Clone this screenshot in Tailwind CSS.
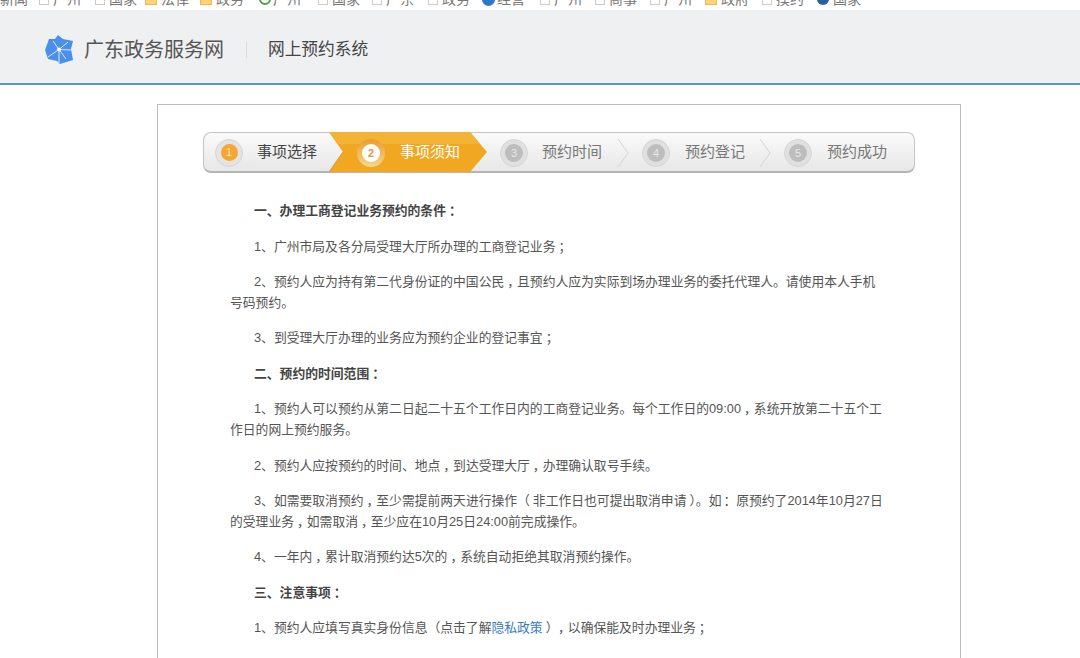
<!DOCTYPE html>
<html lang="zh-CN">
<head>
  <meta charset="UTF-8">
  <title>网上预约系统</title>
  <script src="https://cdn.jsdelivr.net/npm/@tailwindcss/browser@4"></script>
</head>
<body class="bg-white h-[658px] overflow-hidden font-['Liberation_Sans','Noto_Sans_CJK_SC',sans-serif] text-[13px] text-[#555]">

  <!-- bookmarks, cut off by the window edge -->
  <div class="h-[10px] overflow-hidden bg-white relative text-[14px] leading-[14px] text-[#777] whitespace-nowrap">
    <div class="flex -mt-[8px] items-center">
      <span class="w-[39px]">新闻</span>
      <span class="w-[56px] flex items-center gap-[4px]"><i class="block w-[10px] h-[11px] border border-[#ccc]"></i>广州</span>
      <span class="w-[50px] flex items-center gap-[4px]"><i class="block w-[10px] h-[11px] border border-[#ccc]"></i>国家</span>
      <span class="w-[55px] flex items-center gap-[4px]"><i class="block w-[12px] h-[11px] bg-[#ffd479] border border-[#eeb84f]"></i>法律</span>
      <span class="w-[59px] flex items-center gap-[4px]"><i class="block w-[12px] h-[11px] bg-[#ffd479] border border-[#eeb84f]"></i>政务</span>
      <span class="w-[59px] flex items-center gap-[2px]"><i class="block w-[12px] h-[12px] rounded-full border-2 border-[#4aa34a] bg-white"></i>广州</span>
      <span class="w-[54px] flex items-center gap-[4px]"><i class="block w-[10px] h-[11px] border border-[#ccc]"></i>国家</span>
      <span class="w-[56px] flex items-center gap-[4px]"><i class="block w-[10px] h-[11px] border border-[#ccc]"></i>广东</span>
      <span class="w-[54px] flex items-center gap-[4px]"><i class="block w-[10px] h-[11px] border border-[#ccc]"></i>政务</span>
      <span class="w-[58px] flex items-center gap-[2px]"><i class="block w-[13px] h-[13px] rounded-full bg-[#2f78c4]"></i>经营</span>
      <span class="w-[55px] flex items-center gap-[4px]"><i class="block w-[10px] h-[11px] border border-[#ccc]"></i>广州</span>
      <span class="w-[55px] flex items-center gap-[4px]"><i class="block w-[10px] h-[11px] border border-[#ccc]"></i>商事</span>
      <span class="w-[55px] flex items-center gap-[4px]"><i class="block w-[10px] h-[11px] border border-[#ccc]"></i>广州</span>
      <span class="w-[57px] flex items-center gap-[4px]"><i class="block w-[12px] h-[11px] bg-[#ffd479] border border-[#eeb84f]"></i>政府</span>
      <span class="w-[55px] flex items-center gap-[4px]"><i class="block w-[10px] h-[11px] border border-[#ccc]"></i>摸约</span>
      <span class="flex items-center gap-[4px]"><i class="block w-[12px] h-[12px] rounded-full bg-[#2c5f9e]"></i>国家</span>
    </div>
  </div>

  <!-- Header -->
  <header class="h-[75px] pt-[6px] bg-[#eff0f2] border-b-2 border-[#5b93c7] flex items-center pl-[45px] box-border">
    <svg class="w-[30px] h-[30px] shrink-0" viewBox="0 0 30 30">
      <path d="M13 0 L18 4 L28 6 L26 14 L28 25 L15 29 L12 26 L3 24 L0 15 L4 4 L10 4Z" fill="#4a90ea"/>
      <g stroke="#d8e8fb" stroke-width="1">
        <path d="M14 14.5 L8 6"/>
        <path d="M14 14.5 L23 7"/>
        <path d="M14 14.5 L27 15"/>
        <path d="M14 14.5 L21 24"/>
        <path d="M14 14.5 L14 28"/>
        <path d="M14 14.5 L3 22"/>
      </g>
      <circle cx="14" cy="14.5" r="2" fill="#fff"/>
    </svg>
    <span class="ml-[9px] text-[20px] text-[#555]">广东政务服务网</span>
    <i class="block w-px h-[16px] bg-[#d9dadc] ml-[22px]"></i>
    <span class="ml-[21px] text-[16.7px] text-[#444]">网上预约系统</span>
  </header>

  <!-- Main card -->
  <main class="w-[804px] ml-[157px] mt-[19px] h-[600px] border border-[#bdbdbd] bg-white pt-[27px]">
    <div class="relative mx-[45px] w-[712px] h-[41px] rounded-[8px] border border-[#c4c4c4] border-b-2 border-b-[#b5b5b5] bg-gradient-to-b from-[#fafafa] to-[#e7e7e7] flex pl-[11px] box-border">
      <div class="w-[115px] pt-[1px] flex items-center shrink-0">
        <span class="w-[28px] h-[28px] rounded-full bg-[#e4e4e4] border border-[#d6d6d6] flex items-center justify-center shrink-0"><b class="w-[17px] h-[17px] rounded-full bg-[#f5a733] text-[#fbe3b8] text-[11px] leading-[17px] text-center font-normal">1</b></span>
        <span class="ml-[14px] text-[15px] text-[#444] whitespace-nowrap">事项选择</span>
      </div>
      <div class="relative w-[158px] pt-[1px] shrink-0 flex items-center">
        <svg class="absolute -left-px -top-px w-[159px] h-[41px]" viewBox="0 0 159 41">
          <polygon points="0,0 141,0 158,20 141,40 0,40 14,20" fill="#f2a723"/>
          <polygon points="0,0 141,0 151,12 9,12" fill="#f3b334"/>
          <path d="M0 40 L14 20" stroke="#cf9a3a" fill="none"/>
        </svg>
        <span class="relative ml-[27px] w-[28px] h-[28px] rounded-full bg-gradient-to-b from-[#e89d28] to-[#f9d68a] flex items-center justify-center shrink-0"><b class="w-[18px] h-[18px] rounded-full bg-white text-[#ee8f3a] text-[11px] leading-[18px] text-center">2</b></span>
        <span class="relative ml-[15px] text-[15px] text-white whitespace-nowrap">事项须知</span>
      </div>
      <div class="w-[142px] pt-[1px] flex items-center shrink-0 relative text-[#777]">
        <span class="ml-[12px] w-[28px] h-[28px] rounded-full bg-[#e0e0e0] border border-[#d6d6d6] flex items-center justify-center shrink-0"><b class="w-[18px] h-[18px] rounded-full bg-[#bdbdbd] text-[#e8e8e8] text-[11px] leading-[18px] text-center font-normal">3</b></span>
        <span class="ml-[14px] text-[15px] whitespace-nowrap">预约时间</span>
        <svg class="absolute right-[1px] top-[5px] w-[12px] h-[30px]" viewBox="0 0 12 30"><path d="M1 1 L11 15 L1 29" fill="none" stroke="#d4d4d4"/></svg>
      </div>
      <div class="w-[142px] pt-[1px] flex items-center shrink-0 relative text-[#777]">
        <span class="ml-[12px] w-[28px] h-[28px] rounded-full bg-[#e0e0e0] border border-[#d6d6d6] flex items-center justify-center shrink-0"><b class="w-[18px] h-[18px] rounded-full bg-[#bdbdbd] text-[#e8e8e8] text-[11px] leading-[18px] text-center font-normal">4</b></span>
        <span class="ml-[15px] text-[15px] whitespace-nowrap">预约登记</span>
        <svg class="absolute right-[1px] top-[5px] w-[12px] h-[30px]" viewBox="0 0 12 30"><path d="M1 1 L11 15 L1 29" fill="none" stroke="#d4d4d4"/></svg>
      </div>
      <div class="w-[142px] pt-[1px] flex items-center shrink-0 text-[#777]">
        <span class="ml-[12px] w-[28px] h-[28px] rounded-full bg-[#e0e0e0] border border-[#d6d6d6] flex items-center justify-center shrink-0"><b class="w-[18px] h-[18px] rounded-full bg-[#bdbdbd] text-[#e8e8e8] text-[11px] leading-[18px] text-center font-normal">5</b></span>
        <span class="ml-[15px] text-[15px] whitespace-nowrap">预约成功</span>
      </div>
    </div>

    <!-- Notice text -->
    <div class="mt-[27.2px] pl-[72px] w-[729px] text-[12.8px] leading-[21px] flex flex-col gap-[14.4px] [&>p]:indent-[24px]">
      <p class="font-bold text-[#444]">一、办理工商登记业务预约的条件<span class="pl-[3px] tracking-[-3px]">：</span></p>
      <p>1、广州市局及各分局受理大厅所办理的工商登记业务<span class="pl-[3px] tracking-[-3px]">；</span></p>
      <p>2、预约人应为持有第二代身份证的中国公民<span class="pl-[3px] tracking-[-3px]">，</span>且预约人应为实际到场办理业务的委托代理人。请使用本人手机<br>号码预约。</p>
      <p>3、到受理大厅办理的业务应为预约企业的登记事宜<span class="pl-[3px] tracking-[-3px]">；</span></p>
      <p class="font-bold text-[#444]">二、预约的时间范围<span class="pl-[3px] tracking-[-3px]">：</span></p>
      <p>1、预约人可以预约从第二日起二十五个工作日内的工商登记业务。每个工作日的09:00<span class="pl-[3px] tracking-[-3px]">，</span>系统开放第二十五个工<br>作日的网上预约服务。</p>
      <p>2、预约人应按预约的时间、地点<span class="pl-[3px] tracking-[-3px]">，</span>到达受理大厅<span class="pl-[3px] tracking-[-3px]">，</span>办理确认取号手续。</p>
      <p>3、如需要取消预约<span class="pl-[3px] tracking-[-3px]">，</span>至少需提前两天进行操作<span class="pr-[3px]">（</span>非工作日也可提出取消申请<span class="pl-[3px]">）</span>。如<span class="pl-[2px]">：</span>原预约了2014年10月27日<br>的受理业务<span class="pl-[3px] tracking-[-3px]">，</span>如需取消<span class="pl-[3px] tracking-[-3px]">，</span>至少应在10月25日24:00前完成操作。</p>
      <p>4、一年内<span class="pl-[3px] tracking-[-3px]">，</span>累计取消预约达5次的<span class="pl-[3px] tracking-[-3px]">，</span>系统自动拒绝其取消预约操作。</p>
      <p class="font-bold text-[#444]">三、注意事项<span class="pl-[3px] tracking-[-3px]">：</span></p>
      <p>1、预约人应填写真实身份信息（点击了解<a class="text-[#3a7cc0]">隐私政策</a><span class="px-[3px]">）</span><span class="pl-[3px] tracking-[-3px]">，</span>以确保能及时办理业务<span class="pl-[3px] tracking-[-3px]">；</span></p>
    </div>
  </main>

</body>
</html>
